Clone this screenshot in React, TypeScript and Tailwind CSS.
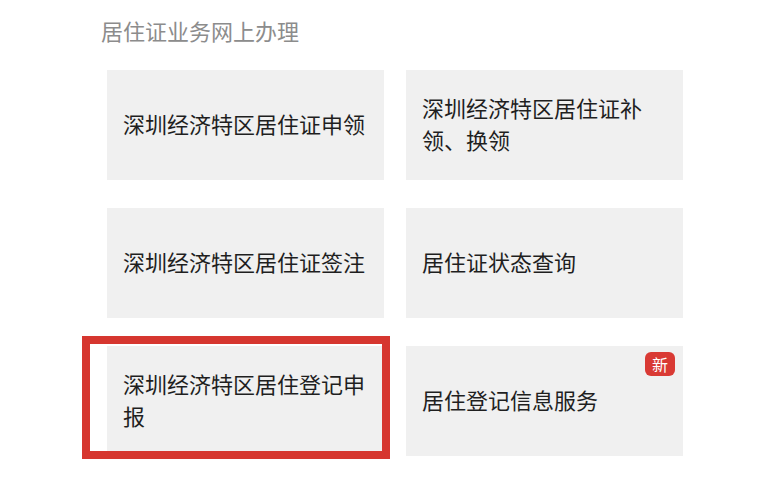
import React from "react";

const items = [
  { label: "深圳经济特区居住证申领" },
  { label: "深圳经济特区居住证补领、换领" },
  { label: "深圳经济特区居住证签注" },
  { label: "居住证状态查询" },
  { label: "深圳经济特区居住登记申报", highlight: true },
  { label: "居住登记信息服务", isNew: true },
];

export default function App() {
  return (
    <div
      className="w-[770px] h-[488px] bg-white overflow-hidden"
      style={{ fontFamily: '"Noto Sans CJK SC", "Noto Sans", sans-serif' }}
    >
      <div className="pl-[101px] pt-[15px] text-[22px] leading-[30px] text-[#8c8c8c]">
        居住证业务网上办理
      </div>

      <div className="mt-[25px] ml-[107px] grid grid-cols-[277px_277px] gap-x-[22px] gap-y-[28px]">
        {items.map((item) => (
          <div key={item.label} className="relative">
            <div className="h-[110px] bg-[#f0f0f0] pl-4 pr-3 pb-[4px] flex items-center">
              <span className="text-[22px] leading-[32px] text-[#1f1f1f]">{item.label}</span>
            </div>
            {item.isNew && (
              <span className="absolute top-[6px] right-[8px] w-[30px] h-[24px] rounded-[6px] bg-[#d93a34] text-white text-[16px] leading-[24px] text-center">
                新
              </span>
            )}
            {item.highlight && (
              <div className="absolute -left-[25px] -right-[6px] -top-[10px] -bottom-[3px] border-[8px] border-[#d6362f] pointer-events-none" />
            )}
          </div>
        ))}
      </div>
    </div>
  );
}
